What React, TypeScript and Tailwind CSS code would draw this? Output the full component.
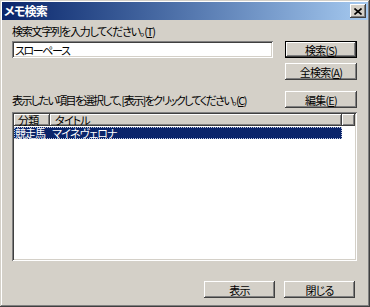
import React from "react";

const raised =
  "bg-[#d4d0c8] shadow-[inset_-1px_-1px_#404040,inset_1px_1px_#ffffff,inset_-2px_-2px_#808080,inset_2px_2px_#d4d0c8]";
const sunken =
  "shadow-[inset_1px_1px_#808080,inset_-1px_-1px_#ffffff,inset_2px_2px_#404040,inset_-2px_-2px_#d4d0c8]";

function Btn({ children, def }: { children: React.ReactNode; def?: boolean }) {
  if (def) {
    return (
      <div className="w-[72px] h-[17px] border border-black shrink-0">
        <div className={`${raised} w-full h-full flex items-center justify-center text-[11px] leading-[12px] text-black whitespace-nowrap`}>
          {children}
        </div>
      </div>
    );
  }
  return (
    <div className={`${raised} shrink-0 w-[72px] h-[17px] flex items-center justify-center text-[11px] leading-[12px] text-black whitespace-nowrap`}>
      {children}
    </div>
  );
}

export default function App() {
  return (
    <div
      className="w-[370px] h-[307px] bg-[#d4d0c8] p-[2px] flex flex-col text-black shadow-[inset_-1px_-1px_#404040,inset_1px_1px_#d4d0c8,inset_-2px_-2px_#808080,inset_2px_2px_#ffffff] [font-feature-settings:'palt'] overflow-hidden whitespace-nowrap tracking-[-0.8px]"
      style={{ fontFamily: '"Noto Sans CJK JP", "Noto Sans", sans-serif' }}
    >
      <div className="h-[18px] shrink-0 flex items-center bg-gradient-to-r from-[#0a246a] to-[#a6caf0] pl-[2px] pr-[2px]">
        <span className="text-white font-bold text-[12px] leading-[12px]">メモ検索</span>
        <div className={`${raised} ml-auto w-[16px] h-[14px] flex items-center justify-center`}>
          <svg width="8" height="7" viewBox="0 0 8 7">
            <path d="M0.5 0.5 L7.5 6.5 M7.5 0.5 L0.5 6.5" stroke="#000" strokeWidth="1.6" />
          </svg>
        </div>
      </div>
      <div className="flex-1 flex flex-col pl-[10px] pr-[11px] pt-[4px]">
        <div className="h-[14px] leading-[14px] text-[11px] tracking-[-1.2px]">
          検索文字列を入力してください。(<span className="underline">T</span>)
        </div>
        <div className="mt-[3px] flex items-start">
          <div className={`${sunken} bg-white w-[261px] h-[17px] flex items-center pl-[3px] text-[11px] leading-[12px] tracking-[-1.4px]`}>
            スローペース
          </div>
          <div className="ml-auto">
            <Btn def>
              検索(<span className="underline">S</span>)
            </Btn>
          </div>
        </div>
        <div className="mt-[5px] flex justify-end">
          <Btn>
            全検索(<span className="underline">A</span>)
          </Btn>
        </div>
        <div className="mt-[11px] flex items-end">
          <div className="text-[11px] leading-[14px] mb-[1px] tracking-[-1.6px]">
            表示したい項目を選択して、[表示]をクリックしてください。(<span className="underline">C</span>)
          </div>
          <div className="ml-auto">
            <Btn>
              編集(<span className="underline">E</span>)
            </Btn>
          </div>
        </div>
        <div className={`${sunken} bg-white mt-[4px] h-[149px] p-[2px] flex flex-col`}>
          <div className="h-[12px] flex text-[11px] leading-[11px]">
            <div className={`${raised} w-[36px] h-full flex items-center pl-[4px]`}>分類</div>
            <div className={`${raised} w-[292px] h-full flex items-center pl-[5px]`}>タイトル</div>
            <div className={`${raised} flex-1 h-full`} />
          </div>
          <div className="mt-[1px] w-[328px] h-[12px] bg-[#0a246a] text-white flex text-[11px] leading-[11px] outline outline-1 outline-dotted outline-[#c0c8e0] -outline-offset-1">
            <div className="w-[37px] shrink-0 pl-[1px] flex items-center tracking-[-1px]">競走馬</div>
            <div className="flex-1 pl-[1px] flex items-center">マイネヴェロナ</div>
          </div>
        </div>
        <div className="mt-[20px] flex justify-end gap-[9px] mr-[2px]">
          <div className={`${raised} w-[71px] h-[17px] flex items-center justify-center text-[11px] leading-[12px]`}>表示</div>
          <div className={`${raised} w-[71px] h-[17px] flex items-center justify-center text-[11px] leading-[12px]`}>閉じる</div>
        </div>
      </div>
    </div>
  );
}
